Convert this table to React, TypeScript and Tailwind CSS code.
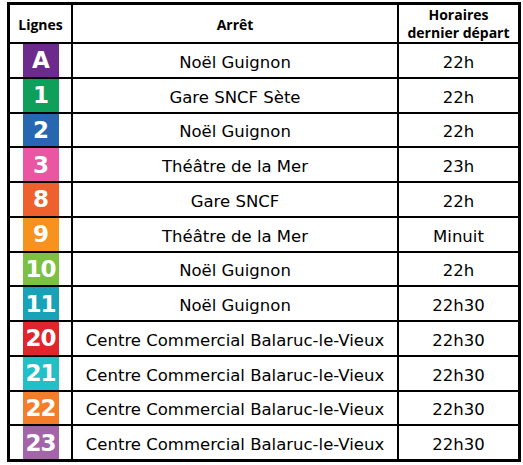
import React from 'react'

const rows = [
  { line: 'A', bg: 'bg-[#6b2a8c]', stop: 'Noël Guignon', time: '22h' },
  { line: '1', bg: 'bg-[#0e9f5a]', stop: 'Gare SNCF Sète', time: '22h' },
  { line: '2', bg: 'bg-[#2767b1]', stop: 'Noël Guignon', time: '22h' },
  { line: '3', bg: 'bg-[#ea56a1]', stop: 'Théâtre de la Mer', time: '23h' },
  { line: '8', bg: 'bg-[#ef602f]', stop: 'Gare SNCF', time: '22h' },
  { line: '9', bg: 'bg-[#f7921e]', stop: 'Théâtre de la Mer', time: 'Minuit' },
  { line: '10', bg: 'bg-[#7cc142]', stop: 'Noël Guignon', time: '22h' },
  { line: '11', bg: 'bg-[#17a2b8]', stop: 'Noël Guignon', time: '22h30' },
  { line: '20', bg: 'bg-[#e1262b]', stop: 'Centre Commercial Balaruc-le-Vieux', time: '22h30' },
  { line: '21', bg: 'bg-[#22bfc7]', stop: 'Centre Commercial Balaruc-le-Vieux', time: '22h30' },
  { line: '22', bg: 'bg-[#f47d2c]', stop: 'Centre Commercial Balaruc-le-Vieux', time: '22h30' },
  { line: '23', bg: 'bg-[#a364a9]', stop: 'Centre Commercial Balaruc-le-Vieux', time: '22h30' },
]

export default function App() {
  return (
    <div className="w-[523px] h-[465px] bg-white pt-[2px] pl-[7px] font-['DejaVu_Sans',sans-serif] text-black">
      <div className="w-[514px] h-[460px] bg-black p-[3px] grid grid-cols-[61px_324px_119px] grid-rows-[37px_repeat(12,minmax(0,1fr))] gap-[2px]">
        {/* header */}
        <div className="bg-white flex items-center justify-center text-[14px] font-bold font-['Open_Sans',sans-serif] leading-[18px] pt-[2px]">Lignes</div>
        <div className="bg-white flex items-center justify-center text-[14px] font-bold font-['Open_Sans',sans-serif] leading-[18px] pt-[2px]">Arrêt</div>
        <div className="bg-white flex flex-col items-center justify-center text-[14px] font-bold font-['Open_Sans',sans-serif] leading-[18px]">
          <span>Horaires</span>
          <span>dernier départ</span>
        </div>

        {rows.map(r => (
          <React.Fragment key={r.line}>
            <div className="bg-white flex justify-center overflow-hidden">
              <div className={`${r.bg} w-[36px] h-full flex items-center justify-center text-white font-bold text-[23px] leading-none tracking-[-1px] pt-[1px]`}>
                {r.line}
              </div>
            </div>
            <div className="bg-white flex items-center justify-center text-[16.5px] leading-[20px] pt-[5px]">{r.stop}</div>
            <div className="bg-white flex items-center justify-center text-[16.5px] leading-[20px] pt-[5px]">{r.time}</div>
          </React.Fragment>
        ))}
      </div>
    </div>
  )
}
